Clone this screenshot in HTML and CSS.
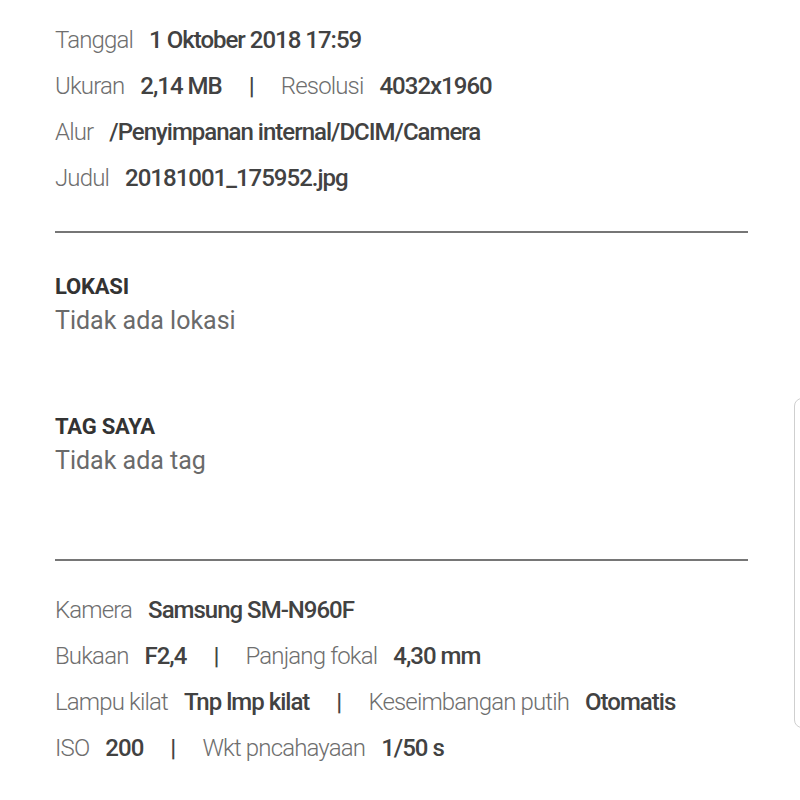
FILE: index.html
```html
<!DOCTYPE html>
<html>
  <head>
    <link rel="stylesheet" href="styles.css">
    <title>Detail</title>
  </head>
  <body>
    <div class="details">
      <div class="info-group">
        <div class="info-row">
          <span class="label">Tanggal</span><span class="value">1 Oktober 2018 17:59</span>
        </div>
        <div class="info-row">
          <span class="label">Ukuran</span><span class="value">2,14 MB</span>
          <span class="sep">|</span>
          <span class="label">Resolusi</span><span class="value">4032x1960</span>
        </div>
        <div class="info-row">
          <span class="label">Alur</span><span class="value">/Penyimpanan internal/DCIM/Camera</span>
        </div>
        <div class="info-row">
          <span class="label">Judul</span><span class="value">20181001_175952.jpg</span>
        </div>
      </div>

      <hr class="divider">

      <div class="section section-location">
        <div class="section-title">LOKASI</div>
        <div class="section-text">Tidak ada lokasi</div>
      </div>
      <div class="section section-tags">
        <div class="section-title">TAG SAYA</div>
        <div class="section-text">Tidak ada tag</div>
      </div>

      <hr class="divider divider-bottom">

      <div class="info-group">
        <div class="info-row">
          <span class="label">Kamera</span><span class="value">Samsung SM-N960F</span>
        </div>
        <div class="info-row">
          <span class="label">Bukaan</span><span class="value">F2,4</span>
          <span class="sep">|</span>
          <span class="label">Panjang fokal</span><span class="value">4,30 mm</span>
        </div>
        <div class="info-row">
          <span class="label">Lampu kilat</span><span class="value">Tnp lmp kilat</span>
          <span class="sep">|</span>
          <span class="label">Keseimbangan putih</span><span class="value">Otomatis</span>
        </div>
        <div class="info-row">
          <span class="label">ISO</span><span class="value">200</span>
          <span class="sep">|</span>
          <span class="label">Wkt pncahayaan</span><span class="value">1/50 s</span>
        </div>
      </div>
    </div>
    <div class="scroll-handle"></div>
  </body>
</html>
```

FILE: styles.css
```css
html, body {
  margin: 0;
  padding: 0;
  background-color: #fff;
}

body {
  position: relative;
  width: 800px;
  height: 800px;
  overflow: hidden;
  font-family: Roboto, "Liberation Sans", sans-serif;
}

.details {
  padding: 17px 52px 0 55px;
}

.info-row {
  display: flex;
  align-items: center;
  height: 46px;
  font-size: 24px;
  letter-spacing: -0.85px;
  white-space: nowrap;
}

.label {
  color: #6e6e6e;
  font-weight: 300;
  margin-right: 16px;
}

.value {
  color: #424242;
  font-weight: 500;
  letter-spacing: -1px;
}

.sep {
  color: #444;
  font-weight: 500;
  margin: 0 27px;
}

.divider {
  border: none;
  height: 2px;
  background-color: #767676;
  margin: 30px 0 0 0;
}

.section-title {
  color: #333;
  font-size: 22px;
  font-weight: 700;
  letter-spacing: -0.2px;
  line-height: 32px;
}

.section-text {
  color: #6a6a6a;
  font-size: 25px;
  letter-spacing: 0;
  line-height: 36px;
}

.section-location {
  margin-top: 38px;
}

.section-tags {
  margin-top: 72px;
}

.divider-bottom {
  margin-top: 80px;
  margin-bottom: 26px;
}

.scroll-handle {
  position: absolute;
  left: 794px;
  top: 398px;
  width: 20px;
  height: 330px;
  border: 1.5px solid #cfcfcf;
  border-radius: 8px;
  box-sizing: border-box;
}
```
